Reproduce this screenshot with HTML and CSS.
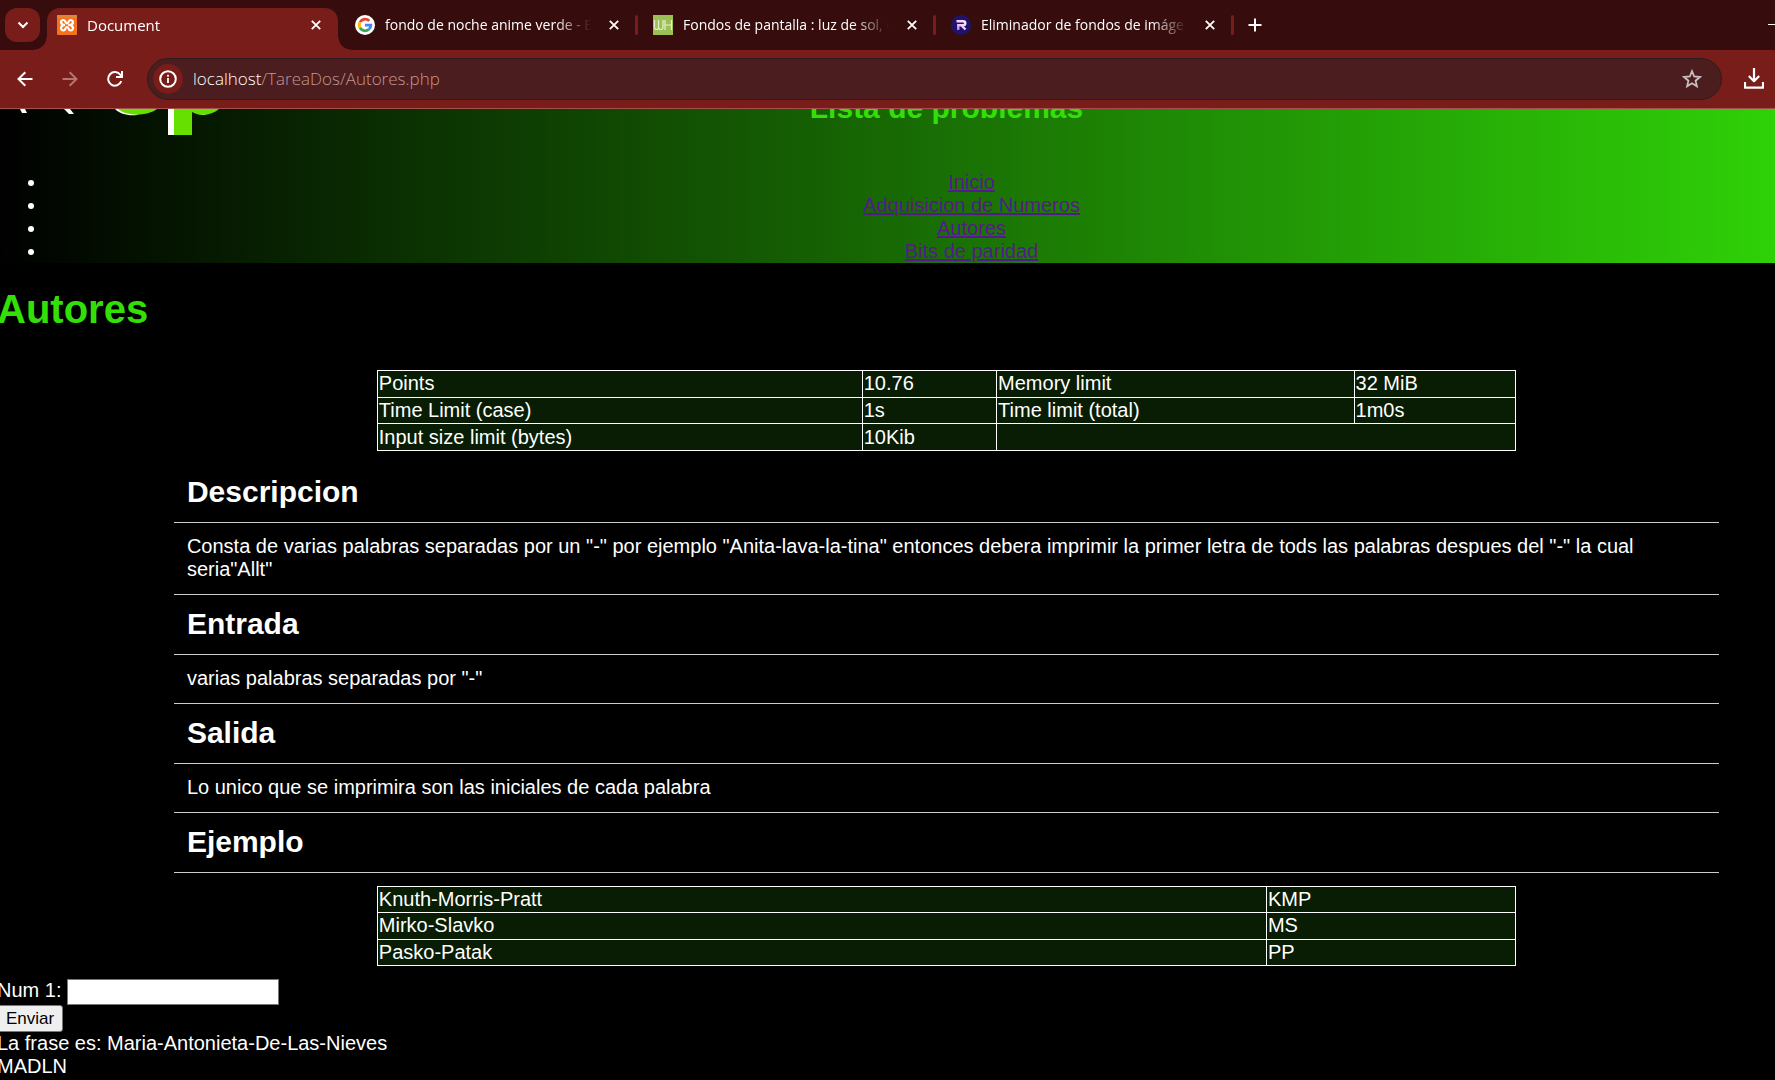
FILE: index.html
```html
<!DOCTYPE html>
<html lang="es">
<head>
<meta charset="utf-8">
<title>Document</title>
<link rel="stylesheet" href="styles.css">
</head>
<body>
<div class="browser">
  <div class="tabstrip">
    <button class="tab-search" aria-label="Buscar pestañas"><svg width="12" height="8" viewBox="0 0 12 8"><path d="M1.500 1.500 6 6l4.500-4.500" fill="none" stroke="#fff" stroke-width="2"/></svg></button>
    <div class="tab tab-active">
      <svg class="favicon" viewBox="0 0 20 20"><rect width="20" height="20" rx="1" fill="#f4731c"/><path d="M0 0h20v3H0z" fill="#d9873f"/><path d="M8 10C3 10 3 5 6.500 5 9 5 8 8.500 10 8.500S11 5 13.500 5C17 5 17 10 12 10c5 0 5 5.500 1.500 5.500C11 15.500 12 12 10 12s-1 3.500-3.500 3.500C3 15.500 3 10 8 10" fill="none" stroke="#fff" stroke-width="2.200" stroke-linejoin="round"/></svg>
      <span class="tab-title">Document</span>
      <button class="tab-close" aria-label="Cerrar"><svg width="10" height="10" viewBox="0 0 10 10"><path d="M.8.8l8.400 8.400M9.200.8.8 9.200" stroke="#fff" stroke-width="1.800"/></svg></button>
    </div>
    <div class="tab">
      <svg class="favicon" viewBox="0 0 20 20"><circle cx="10" cy="10" r="10" fill="#fff"/><g fill="none" stroke-width="2.800"><path d="M14.200 5.900A5.800 5.800 0 0 0 5 7.200" stroke="#ea4335"/><path d="M5 7.200a5.800 5.800 0 0 0 0 5.600" stroke="#fbbc05"/><path d="M5 12.800a5.800 5.800 0 0 0 8.800 1.600" stroke="#34a853"/><path d="M13.800 14.400c1.300-1 2-2.400 2-4.200H10" stroke="#4285f4"/></g></svg>
      <span class="tab-title">fondo de noche anime verde - B</span>
      <button class="tab-close" aria-label="Cerrar"><svg width="10" height="10" viewBox="0 0 10 10"><path d="M.8.8l8.400 8.400M9.200.8.8 9.200" stroke="#fff" stroke-width="1.800"/></svg></button>
    </div>
    <div class="tab">
      <svg class="favicon" viewBox="0 0 20 20"><rect width="20" height="20" fill="#9cc053"/><path d="M1.500 5v7q0 2.500 2 2.500t2-2.500V5v7q0 2.500 2.300 2.500T10 12V5M12 5v10M12 10h6.500M18.500 5v10" fill="none" stroke="#e6f0cf" stroke-width="1.200"/></svg>
      <span class="tab-title">Fondos de pantalla : luz de sol, n</span>
      <button class="tab-close" aria-label="Cerrar"><svg width="10" height="10" viewBox="0 0 10 10"><path d="M.8.8l8.400 8.400M9.200.8.8 9.200" stroke="#fff" stroke-width="1.800"/></svg></button>
    </div>
    <div class="tab">
      <svg class="favicon" viewBox="0 0 20 20"><defs><linearGradient id="r" x1="0" y1="1" x2="1" y2="0"><stop offset="0" stop-color="#8f7bff"/><stop offset=".5" stop-color="#ffc9f4"/><stop offset="1" stop-color="#f3e8ff"/></linearGradient></defs><circle cx="10" cy="10" r="10" fill="#20136b"/><path d="M5.500 6.200H12q2.300 0 2.300 2t-2.300 2H7.200V15M10.500 10.500l4 4" fill="none" stroke="url(#r)" stroke-width="2.400"/></svg>
      <span class="tab-title">Eliminador de fondos de imáge</span>
      <button class="tab-close" aria-label="Cerrar"><svg width="10" height="10" viewBox="0 0 10 10"><path d="M.8.8l8.400 8.400M9.200.8.8 9.200" stroke="#fff" stroke-width="1.800"/></svg></button>
    </div>
    <button class="new-tab" aria-label="Nueva pestaña"><svg width="14" height="14" viewBox="0 0 14 14"><path d="M7 .5v13M.5 7h13" stroke="#fff" stroke-width="2"/></svg></button>
    <button class="minimize" aria-label="Minimizar"></button>
  </div>
  <div class="toolbar">
    <button class="tool" aria-label="Atrás"><svg width="16" height="16" viewBox="0 0 16 16"><path d="M15.500 8H2M8.300 1.200 1.500 8l6.800 6.800" fill="none" stroke="#fff" stroke-width="2"/></svg></button>
    <button class="tool" aria-label="Adelante"><svg width="16" height="16" viewBox="0 0 16 16"><path d="M.5 8H14M7.700 1.200 14.500 8l-6.800 6.800" fill="none" stroke="#b67573" stroke-width="2"/></svg></button>
    <button class="tool" aria-label="Recargar"><svg width="18" height="18" viewBox="0 0 18 18"><path d="M15.300 11.200A6.800 6.800 0 1 1 14.500 5L16 6.800M16 1v6h-6" fill="none" stroke="#fff" stroke-width="2"/></svg></button>
    <div class="omnibox">
      <button class="site-info" aria-label="Información del sitio"><svg width="18" height="18" viewBox="0 0 18 18"><circle cx="9" cy="9" r="7.800" fill="none" stroke="#fff" stroke-width="2"/><path d="M9 8v5M9 4.800v2" stroke="#fff" stroke-width="1.800"/></svg></button>
      <div class="url" role="textbox" aria-label="Dirección"><span class="host">localhost</span>/TareaDos/Autores.php</div>
      <button class="star" aria-label="Marcador"><svg width="20" height="20" viewBox="0 0 20 20"><path d="m10 2.200 2.200 5.300 5.700.5-4.300 3.700 1.300 5.600L10 14.300l-4.900 3 1.300-5.600L2.100 8l5.700-.5z" fill="none" stroke="#c9bfc2" stroke-width="1.800"/></svg></button>
    </div>
    <button class="download" aria-label="Descargas"><svg width="20" height="21" viewBox="0 0 20 21"><path d="M10 0v13M4.800 8l5.200 5.200L15.200 8M1 14v5.600h18V14" fill="none" stroke="#fff" stroke-width="2.200" stroke-linejoin="round"/></svg></button>
  </div>
  <div class="page">
    <header class="site-header">
      <svg class="logo" width="240" height="28" viewBox="0 0 240 28"><path d="M20 0h5l2 4h-5zM64 0h6l4 5h-5zM115 0h30l-8 6c-9 1-17-1-22-6zM168 0h8v26h-8zM190 0h10l6 6c-6 0-11-2-14-4z" fill="#fff"/><path d="M118 0h39c-9 7-30 8-39 0zM174 0h45c-7 6-18 8-27 3v23h-18z" fill="#66e000"/></svg>
      <h2 class="site-title">Lista de problemas</h2>
      <ul class="menu">
        <li><a href="#inicio">Inicio</a></li>
        <li><a href="#numeros">Adquisicion de Numeros</a></li>
        <li><a href="#autores">Autores</a></li>
        <li><a href="#paridad">Bits de paridad</a></li>
      </ul>
    </header>
    <h1 id="autores">Autores</h1>
    <table class="limits">
      <colgroup><col class="c1"><col class="c2"><col class="c3"><col class="c4"></colgroup>
      <tr><td>Points</td><td>10.76</td><td>Memory limit</td><td>32 MiB</td></tr>
      <tr><td>Time Limit (case)</td><td>1s</td><td>Time limit (total)</td><td>1m0s</td></tr>
      <tr><td>Input size limit (bytes)</td><td>10Kib</td><td colspan="2"></td></tr>
    </table>
    <main class="problem">
      <h2>Descripcion</h2>
      <p>Consta de varias palabras separadas por un "-" por ejemplo "Anita-lava-la-tina" entonces debera imprimir la primer letra de tods las palabras despues del "-" la cual seria"Allt"</p>
      <h2>Entrada</h2>
      <p>varias palabras separadas por "-"</p>
      <h2>Salida</h2>
      <p>Lo unico que se imprimira son las iniciales de cada palabra</p>
      <h2>Ejemplo</h2>
    </main>
    <table class="examples">
      <colgroup><col class="input-col"><col></colgroup>
      <tr><td>Knuth-Morris-Pratt</td><td>KMP</td></tr>
      <tr><td>Mirko-Slavko</td><td>MS</td></tr>
      <tr><td>Pasko-Patak</td><td>PP</td></tr>
    </table>
    <form>
      <div class="field"><label for="num1">Num 1:</label><input id="num1" type="text"></div>
      <button class="send" type="submit">Enviar</button>
    </form>
    <div>La frase es: Maria-Antonieta-De-Las-Nieves</div>
    <div>MADLN</div>
  </div>
</div>
</body>
</html>
```
FILE: styles.css
```css
* { box-sizing: border-box; }
body { margin: 0; background: #000; }
.browser { min-height: 100vh; overflow: hidden; }
.browser svg { display: block; flex: none; }

/* Tab strip */
.tabstrip, .toolbar { font-family: "Open Sans", "Noto Sans", sans-serif; color: #fff; }
.tabstrip button, .toolbar button {
  display: flex; align-items: center; justify-content: center;
  flex: none; padding: 0; border: 0; background: none;
}
.tabstrip { display: flex; height: 50px; background: #360d0c; }
.tabstrip .tab-search {
  width: 35px; height: 34px; margin: 8px 2px 0 5px;
  border-radius: 12px; background: #781d1a;
}
.tab {
  position: relative; display: flex; align-items: center;
  flex: 0 1 298px; min-width: 0; height: 50px; padding: 0 19px 0 15px;
}
.tab:not(.tab-active)::after {
  content: ""; position: absolute; right: 0; top: 15px;
  width: 3px; height: 20px; border-radius: 2px; background: #781d1a;
}
.tab-active { z-index: 0; }
.tab-active::before {
  content: ""; position: absolute; z-index: -1; inset: 8px 2px 0 5px;
  border-radius: 13px 13px 0 0; background: #781d1a;
}
.tab-active::after {
  content: ""; position: absolute; z-index: -1; bottom: 0; left: -8px; right: -11px; height: 13px;
  background:
    radial-gradient(circle at 0 0, transparent 12px, #781d1a 13px) left / 13px 13px no-repeat,
    radial-gradient(circle at 100% 0, transparent 12px, #781d1a 13px) right / 13px 13px no-repeat;
}
.favicon { width: 20px; height: 20px; }
.tab-title {
  flex: 1; min-width: 0; margin: 0 14px 0 10px; overflow: hidden;
  font-size: 14px; line-height: 20px; white-space: nowrap;
  mask-image: linear-gradient(to right, #000 calc(100% - 40px), transparent calc(100% - 4px));
}
.tab-active .tab-title { font-size: 15px; }
.tabstrip .tab-close { width: 10px; height: 20px; }
.tabstrip .new-tab { width: 34px; margin-left: 4px; }
.tabstrip .minimize { width: 7px; height: 1px; margin: 24px 0 0 auto; background: #fff; }

/* Toolbar */
.toolbar {
  display: flex; align-items: center; height: 59px; padding-left: 2px;
  background: #781d1a; border-bottom: 1px solid #a4504c;
}
.toolbar .tool { width: 45px; height: 40px; }
.omnibox {
  display: flex; align-items: center; flex: 1; min-width: 0; height: 42px;
  margin: 0 10px; padding: 0 19px 0 5px;
  border: 1px solid #301c1f; border-radius: 21px; background: #4b1d1e;
}
.toolbar .site-info { width: 30px; height: 30px; border-radius: 50%; background: #781d1a; }
.url { flex: 1; margin-left: 10px; font-size: 17px; line-height: 24px; font-weight: 300; color: #c29594; }
.host { color: #fff; }
.toolbar .download { width: 43px; height: 40px; padding-bottom: 2px; }

/* Page: wider than the window, continues past its right edge */
.page {
  width: calc(100% + 124px); margin-left: -3px;
  font: 20px/23px "Liberation Sans", Arial, sans-serif; color: #fff;
}
.site-header {
  position: relative; display: flex; flex-direction: column; justify-content: flex-end;
  height: 154px; overflow: hidden;
  background: linear-gradient(to right, #000, #32df08); text-align: center;
}
.logo { position: absolute; top: 0; left: 3px; }
.site-title { margin: 0 0 46px; font-size: 30px; line-height: 34px; color: #33df08; }
.menu { margin: 0; padding-left: 50px; }
.menu a { color: #551a8b; }
h1 { margin: 24px 0 38px; font-size: 40px; line-height: 45px; color: #33df08; }
table {
  width: 60%; height: 81px; margin: 0 auto;
  border-collapse: collapse; table-layout: fixed; background: #081d03;
}
td { padding: 1px; border: 1px solid #fff; }
.c1 { width: 42.6%; }
.c2 { width: 11.8%; }
.c3 { width: 31.4%; }
.c4 { width: 14.2%; }
.examples { height: 80px; }
.examples td { padding: 0 1px; }
.input-col { width: 78.1%; }
.problem { width: calc(80% + 26px); margin: 12px auto 13px; }
.problem h2, .problem p { margin: 0; padding: 12px 13px 13px; border-bottom: 1px solid #ccc; }
.problem h2 { font-size: 30px; line-height: 34px; }
form { margin-top: 13px; }
.field { display: flex; gap: 6px; }
.field input { width: 212px; height: 26px; border: 1px solid #767676; background: #fff; font-size: 17px; }
.send {
  display: block; width: 66px; height: 27px; padding: 0;
  border: 1px solid #767676; border-radius: 3px; background: #efefef;
  font: 17px "Liberation Sans", Arial, sans-serif; color: #000;
}
```
